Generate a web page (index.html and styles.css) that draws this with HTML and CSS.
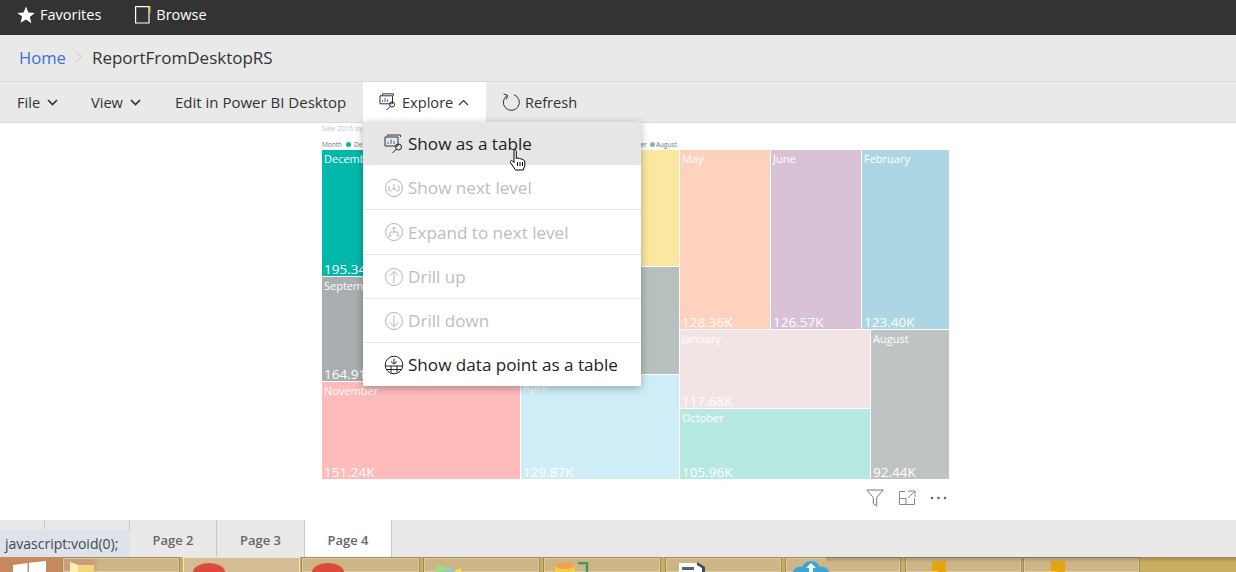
FILE: index.html
```html
<!DOCTYPE html>
<html lang="en-US">
  <head>
    <meta charset="UTF-8">
    <title>ReportFromDesktopRS</title>
    <link rel="stylesheet" href="styles.css">
  </head>
  <body>
    <header class="topbar">
      <a class="topbar-link" href="#">
        <svg class="topbar-star" width="18" height="18" viewBox="0 0 18 18"><path d="M9 0.5l2.4 5.9 6.3 0.5-4.8 4.1 1.500 6.2L9 13.400l-5.400 3.300 1.500-6.200L0.300 6.900l6.300-0.500z" fill="#fff"/></svg>
        Favorites
      </a>
      <a class="topbar-link" href="#">
        <svg width="16" height="18" viewBox="0 0 16 18"><path d="M0.600 0.600h13.400v16.400H0.600z" fill="none" stroke="#fff" stroke-width="1.200"/><path d="M14.800 0v7" stroke="#f2c811" stroke-width="1.400"/></svg>
        Browse
      </a>
    </header>
    <nav class="breadcrumb">
      <a class="crumb-home" href="#">Home</a>
      <svg width="8" height="12" viewBox="0 0 8 12"><path d="M1 1l5.500 5L1 11" fill="none" stroke="#c4c4c4" stroke-width="1"/></svg>
      <span class="crumb-current">ReportFromDesktopRS</span>
    </nav>
    <div class="toolbar">
      <button class="tool tool-file">File
        <svg class="chev" width="11" height="7" viewBox="0 0 11 7"><path d="M1 1l4.500 4.500L10 1" fill="none" stroke="#333" stroke-width="1.700"/></svg>
      </button>
      <button class="tool tool-view">View
        <svg class="chev" width="11" height="7" viewBox="0 0 11 7"><path d="M1 1l4.500 4.500L10 1" fill="none" stroke="#333" stroke-width="1.700"/></svg>
      </button>
      <button class="tool tool-edit">Edit in Power BI Desktop</button>
      <button class="tool tool-explore">
        <svg width="18" height="18" viewBox="0 0 18 18" fill="none" stroke="#333" stroke-width="1"><path d="M3.500 2.500V0.800h10.800v2M1 2.800h12.500v8H1z"/><path d="M3.500 9V7M6 9V5M8.500 9V6.500" stroke="#2f6fb5"/><circle cx="13" cy="11.500" r="2.600" stroke="#222"/><path d="M11 13.500l-3.500 3.500" stroke="#222"/></svg>
        Explore
        <svg class="chev" width="11" height="7" viewBox="0 0 11 7"><path d="M1 6l4.500-4.500L10 6" fill="none" stroke="#333" stroke-width="1.200"/></svg>
      </button>
      <button class="tool tool-refresh">
        <svg width="18" height="18" viewBox="0 0 18 18" fill="none" stroke="#333" stroke-width="1"><path d="M5.400 2.400A8 8 0 1 0 12 1.800"/><path d="M1.600 0.800l3.900 1.600-1 4"/></svg>
        Refresh
      </button>
    </div>

    <main class="canvas">
      <div class="chart-title">Sale 2016 by Month</div>
      <div class="legend">
        <span class="legend-label">Month</span>
        <span class="dot dot-teal"></span><span class="legend-left">December</span>
        <span class="legend-right">ber</span>
        <span class="dot dot-gray"></span><span>August</span>
      </div>
      <div class="treemap">
        <div class="tm-col tm-col-a">
          <div class="tile tile-dec"><span>December</span><b>195.34K</b></div>
          <div class="tile tile-sep"><span>September</span><b>164.91K</b></div>
          <div class="tile tile-nov"><span>November</span><b>151.24K</b></div>
        </div>
        <div class="tm-col tm-col-b">
          <div class="tile tile-yel"></div>
          <div class="tile tile-gry"></div>
          <div class="tile tile-apr"><span>April</span><b>129.87K</b></div>
        </div>
        <div class="tm-col tm-col-c">
          <div class="tm-row tm-row-top">
            <div class="tile tile-may"><span>May</span><b>128.36K</b></div>
            <div class="tile tile-jun"><span>June</span><b>126.57K</b></div>
            <div class="tile tile-feb"><span>February</span><b>123.40K</b></div>
          </div>
          <div class="tm-row tm-row-bot">
            <div class="tm-col tm-col-d">
              <div class="tile tile-jan"><span>January</span><b>117.68K</b></div>
              <div class="tile tile-oct"><span>October</span><b>105.96K</b></div>
            </div>
            <div class="tile tile-aug"><span>August</span><b>92.44K</b></div>
          </div>
        </div>
      </div>
      <div class="visual-actions">
        <svg width="18" height="18" viewBox="0 0 18 18" fill="none" stroke="#777" stroke-width="1"><path d="M0.800 1h16.400l-6.500 7.500v8.500l-3.400-2.500V8.500z"/></svg>
        <svg width="18" height="16" viewBox="0 0 18 16" fill="none" stroke="#888" stroke-width="1"><path d="M7 1.500H1.500v13h15V8M1.500 8.500H8v6M10 1h7v6M17 1l-7 7"/></svg>
        <svg width="17" height="4" viewBox="0 0 17 4" fill="#666"><circle cx="2" cy="2" r="1.300"/><circle cx="8.500" cy="2" r="1.300"/><circle cx="15" cy="2" r="1.300"/></svg>
      </div>

      <ul class="menu">
        <li class="menu-item menu-hover">
          <svg width="20" height="20" viewBox="0 0 20 20" fill="none" stroke="#333"><path d="M3.500 2.500V1h13v2M1 3h13v9H1z"/><path d="M4 10V8M7 10V5.500M10 10V7" stroke="#2f6fb5"/><circle cx="14.500" cy="13" r="3" stroke="#222"/><path d="M12.300 15.200L8.500 19" stroke="#222"/></svg>
          Show as a table
        </li>
        <li class="menu-item menu-off menu-tall menu-next">
          <svg width="20" height="20" viewBox="0 0 20 20" fill="none" stroke="#b4b4b4"><circle cx="10" cy="10" r="8.500"/><path d="M5 8v4l1.500 1.500L8 12M10 6v6M12 12l1.500 1.500L15 12V8M8.500 10.500L10 12l1.500-1.500"/></svg>
          Show next level
        </li>
        <li class="menu-item menu-off menu-tall">
          <svg width="20" height="20" viewBox="0 0 20 20" fill="none" stroke="#b4b4b4"><circle cx="10" cy="10" r="8.500"/><path d="M10 5v5M6 10h8M6 10v4M14 10v4M4.500 14h3M12.500 14h3M8.500 6.500L10 5l1.500 1.500"/></svg>
          Expand to next level
        </li>
        <li class="menu-item menu-off">
          <svg width="20" height="20" viewBox="0 0 20 20" fill="none" stroke="#b4b4b4"><circle cx="10" cy="10" r="8.500"/><path d="M10 16V4.500M5.500 9L10 4.500 14.500 9"/></svg>
          Drill up
        </li>
        <li class="menu-item menu-off">
          <svg width="20" height="20" viewBox="0 0 20 20" fill="none" stroke="#b4b4b4"><circle cx="10" cy="10" r="8.500"/><path d="M10 4v11.500M5.500 11L10 15.500 14.500 11"/></svg>
          Drill down
        </li>
        <li class="menu-item menu-last">
          <svg width="20" height="20" viewBox="0 0 20 20" fill="none" stroke="#222"><circle cx="10" cy="10" r="8.800"/><path d="M1.500 11h17M2 14.500h16M7 11v6.500M13 11v6.500"/><path d="M10 3.500v5M7 6.500L10 9l3-2.500"/></svg>
          Show data point as a table
        </li>
      </ul>
      <svg class="cursor" width="18" height="23" viewBox="0 0 18 23"><path d="M5 1.500c1-1 2.300-.5 2.300 1v7l1.500-.5 1.500.5 1.500.3 2 .7 2 1.500v4.500l-1.500 4.500H6.500L1.500 13.500c-.5-1.500.8-2.500 2-1.500l1.500 1.500z" fill="#fff" stroke="#000" stroke-width="1"/><path d="M8.500 13v4M11 13v4M13.500 13v4" stroke="#000" stroke-width="1"/></svg>
    </main>

    <footer class="tabs">
      <div class="tab tab-first"></div>
      <div class="tab tab-second"></div>
      <div class="tab">Page 2</div>
      <div class="tab tab-third">Page 3</div>
      <div class="tab tab-active">Page 4</div>
      <div class="status-tip">javascript:void(0);</div>
    </footer>

    <div class="taskbar">
      <div class="task-start">
        <svg width="34" height="11" viewBox="0 0 34 11" fill="#fff"><path d="M0 4l14.500-2v9H0zM16 1.800L33 0v11H16z"/></svg>
      </div>
      <div class="task-btn task-b1"><svg width="25" height="10" viewBox="0 0 25 10"><path d="M0 0l8 3h16v7H0z" fill="#f4d77a"/><path d="M0 0l8 3v7H0z" fill="#faeeb0"/></svg></div>
      <div class="task-btn task-b2 task-active"><span class="stop"></span></div>
      <div class="task-btn task-b3"><span class="stop"></span></div>
      <div class="task-btn task-b4"><svg width="26" height="7" viewBox="0 0 26 7"><path d="M0 7L3 0l14 4 8 3z" fill="#a5d98a"/><path d="M4 7l12-3 9 1v2z" fill="#8fc7d8"/><path d="M20 5l6-2v4h-6z" fill="#f5e04a"/></svg></div>
      <div class="task-btn task-b5"><svg width="34" height="10" viewBox="0 0 34 10"><path d="M0 4h20v6H0z" fill="#f6cf3c"/><ellipse cx="10" cy="3.500" rx="10" ry="3.500" fill="#eea354"/><path d="M23 1h9v9" fill="none" stroke="#3c9a5e" stroke-width="2.400"/></svg></div>
      <div class="task-btn task-b6"><svg width="28" height="10" viewBox="0 0 28 10"><path d="M1 1h18l8 5v4H1z" fill="#fff"/><path d="M19 0l8 5v5h-3V6l-5-3z" fill="#2f4a6a"/><path d="M4 5h12v3H4z" fill="#5a6470"/></svg></div>
      <div class="task-btn task-b7"><svg width="36" height="11" viewBox="0 0 36 11"><path d="M0 11c1-4 5-6 9-5 2-4 5-6 9-6s7 2 9 6c4-1 8 1 9 5z" fill="#38a6d8"/><path d="M18 2l5 5h-3v4h-4V7h-3z" fill="#fff"/></svg></div>
      <div class="task-btn task-b8"><svg width="22" height="11" viewBox="0 0 22 11"><path d="M8 0h14v11H8z" fill="#e5a50f"/><path d="M0 10h14v1H0z" fill="#f4cf4a"/></svg></div>
      <div class="task-btn task-b9"><svg width="22" height="11" viewBox="0 0 22 11"><path d="M8 0h14v11H8z" fill="#e5a50f"/><path d="M0 10h14v1H0z" fill="#f4cf4a"/></svg></div>
      <div class="task-shadow"></div>
    </div>
  </body>
</html>
```

FILE: styles.css
```css
* {
  box-sizing: border-box;
}
html, body {
  height: 572px;
  overflow: hidden;
}
body {
  margin: 0;
  display: flex;
  flex-direction: column;
  background: #fff;
  color: #333;
  font-family: "Open Sans", "Noto Sans", sans-serif;
}
a {
  text-decoration: none;
}
button {
  font: inherit;
  color: inherit;
  border: none;
  background: none;
  padding: 0;
}
.topbar {
  height: 35px;
  flex: none;
  background: #333;
  display: flex;
  align-items: center;
  gap: 34px;
  padding: 0 0 6px 17px;
}
.topbar-link {
  display: flex;
  align-items: center;
  gap: 5px;
  color: #fff;
  font-size: 14.500px;
}
.breadcrumb {
  height: 47px;
  flex: none;
  background: #e9e9e9;
  border-bottom: 1px solid #d8d8d8;
  display: flex;
  align-items: center;
  gap: 9px;
  padding: 0 0 2px 19px;
  font-size: 16.600px;
}
.crumb-home {
  color: #3b6fe0;
}
.crumb-current {
  color: #333;
  font-size: 17px;
}
.toolbar {
  height: 41px;
  flex: none;
  background: #e9e9e9;
  border-bottom: 1px solid #d8d8d8;
  display: flex;
  font-size: 14.600px;
  padding-left: 17px;
}
.tool {
  display: flex;
  align-items: center;
  gap: 7px;
  height: 40px;
}
.tool-file {
  width: 74px;
}
.tool-view {
  width: 84px;
}
.tool-edit {
  width: 188px;
  font-size: 15px;
}
.tool-explore {
  width: 123px;
  padding-left: 16px;
  gap: 5px;
  background: #fff;
}
.tool-refresh {
  padding-left: 16px;
  gap: 5px;
}
.canvas {
  flex: 1;
  position: relative;
  background: #fff;
  padding: 1px 0 0 322px;
  min-height: 0;
}
.chart-title {
  font-size: 7px;
  color: #c4c4c4;
  height: 14px;
}
.legend {
  display: flex;
  align-items: center;
  font-size: 6.500px;
  color: #777;
  height: 12px;
  width: 355px;
}
.legend-label {
  margin-right: 4px;
}
.legend-left {
  margin-left: 2px;
}
.legend-right {
  margin-left: auto;
  margin-right: 3px;
}
.dot {
  width: 5px;
  height: 5px;
  border-radius: 50%;
  margin-right: 1px;
}
.dot-teal {
  background: #01b8aa;
}
.dot-gray {
  background: #a0a5a6;
}
.treemap {
  display: flex;
  width: 627px;
  height: 329px;
  gap: 1px;
}
.tm-col {
  display: flex;
  flex-direction: column;
  gap: 1px;
}
.tm-col-a {
  width: 198px;
}
.tm-col-b {
  width: 158px;
}
.tm-col-c {
  flex: 1;
}
.tm-col-d {
  width: 190px;
}
.tm-row {
  display: flex;
  gap: 1px;
}
.tm-row-top {
  height: 179px;
}
.tm-row-bot {
  flex: 1;
}
.tile {
  display: flex;
  flex-direction: column;
  justify-content: space-between;
  padding: 1px 2px 0;
  color: #fff;
  white-space: nowrap;
}
.tile span {
  font-size: 11px;
  line-height: 15px;
}
.tile b {
  font-weight: 400;
  font-size: 13.500px;
  line-height: 18px;
  margin-bottom: -2px;
}
.tile-dec { height: 126px; background: #01b8aa; }
.tile-sep { height: 104px; background: #a9aeb0; }
.tile-nov { flex: 1; background: #fdbbbb; }
.tile-yel { height: 116px; background: #fae8a0; }
.tile-gry { height: 107px; background: #b8bfbf; }
.tile-apr { flex: 1; padding-top: 4px; background: #cfedf7; }
.tile-may { width: 90px; background: #ffd2be; }
.tile-jun { width: 90px; background: #d9c2d6; }
.tile-feb { flex: 1; background: #add6e4; }
.tile-jan { height: 78px; background: #f2e4e4; }
.tile-oct { flex: 1; background: #b8e8e2; }
.tile-aug { flex: 1; background: #bfc3c3; }
.visual-actions {
  display: flex;
  align-items: center;
  justify-content: flex-end;
  gap: 14px;
  width: 625px;
  height: 37px;
}
.menu {
  position: absolute;
  left: 363px;
  top: -1px;
  width: 278px;
  margin: 0;
  padding: 0;
  list-style: none;
  background: #fff;
  box-shadow: 0 2px 8px rgba(0, 0, 0, 0.3);
  font-size: 17.100px;
}
.menu-item {
  height: 44px;
  display: flex;
  align-items: center;
  gap: 4px;
  padding-left: 21px;
  color: #222;
  border-bottom: 1px solid #e8e8e8;
}
.menu-tall {
  height: 45px;
}
.menu-next {
  padding-top: 1px;
}
.menu-last {
  height: 43px;
  border-bottom: none;
}
.menu-hover {
  height: 43px;
  background: #e6e6e6;
  border-bottom: none;
}
.menu-off {
  color: #bfbcbc;
}
.cursor {
  position: absolute;
  left: 509px;
  top: 26px;
}
.tabs {
  height: 37px;
  flex: none;
  position: relative;
  display: flex;
  background: #e9e9e9;
  font-size: 13px;
  font-weight: 600;
  color: #666;
}
.tab {
  width: 87px;
  display: flex;
  align-items: center;
  justify-content: center;
  padding-top: 3px;
  border-right: 1px solid #c8c8c8;
}
.tab-first {
  width: 45px;
}
.tab-second {
  width: 85px;
}
.tab-third {
  width: 88px;
}
.tab-active {
  background: #fff;
}
.status-tip {
  position: absolute;
  left: 0;
  top: 9px;
  width: 130px;
  height: 28px;
  padding-left: 5px;
  display: flex;
  align-items: center;
  background: #dee3ea;
  border-top-right-radius: 3px;
  font-size: 14px;
  font-weight: 400;
  color: #3f4a55;
}
.taskbar {
  height: 15px;
  flex: none;
  position: relative;
  display: flex;
  background: #c9ae62;
  overflow: hidden;
}
.task-start {
  width: 62px;
  background: #c58a5e;
  padding-left: 13px;
  display: flex;
  align-items: flex-end;
}
.task-btn {
  background: #cdb585;
  border: 1px solid #a08a58;
  border-bottom: none;
  box-shadow: inset 0 0 0 1px #dccba2;
  display: flex;
  align-items: flex-end;
  overflow: hidden;
}
.task-b1 { width: 118px; margin-right: 3px; padding-left: 7px; background: linear-gradient(100deg, #cc9c80 25%, #cdb585 32%); }
.task-b2 { width: 117px; margin-right: 1px; padding-left: 9px; }
.task-b3 { width: 119px; margin-right: 3px; padding-left: 10px; }
.task-b4 { width: 117px; margin-right: 3px; padding-left: 11px; }
.task-b5 { width: 118px; margin-right: 4px; padding-left: 11px; }
.task-b6 { width: 117px; margin-right: 3px; padding-left: 12px; }
.task-b7 { width: 116px; margin-right: 4px; padding-left: 7px; }
.task-b8 { width: 117px; margin-right: 1px; padding-left: 18px; }
.task-b9 { width: 117px; padding-left: 19px; }
.task-active {
  background: #d4bc94;
  border-color: #efe5cf;
  box-shadow: none;
}
.task-shadow {
  position: absolute;
  left: 826px;
  right: 0;
  top: 0;
  height: 5px;
  background: linear-gradient(rgba(60, 60, 60, 0.35), rgba(60, 60, 60, 0));
}
.stop {
  width: 32px;
  height: 9px;
  background: #dc4a3c;
  border-radius: 50% 50% 0 0 / 100% 100% 0 0;
}
```
